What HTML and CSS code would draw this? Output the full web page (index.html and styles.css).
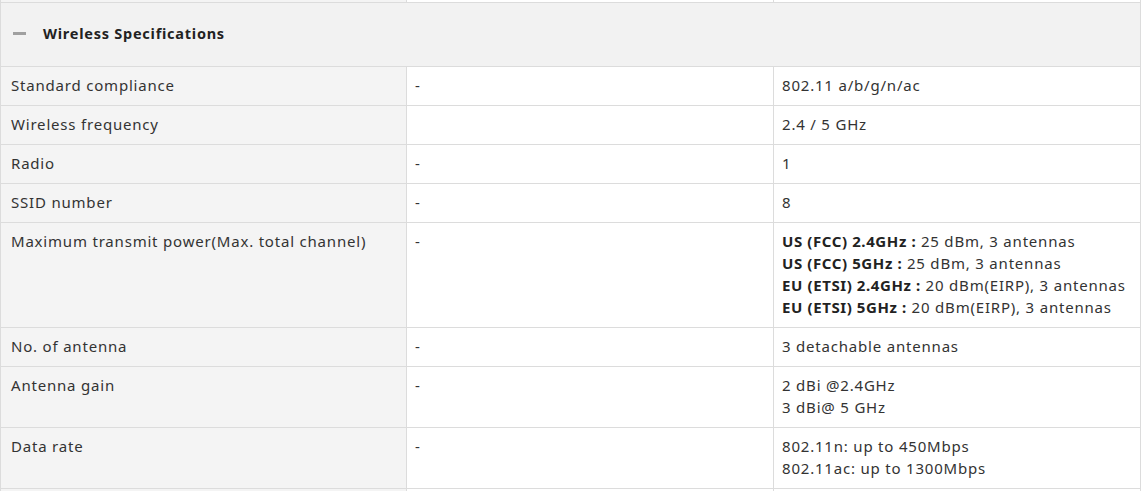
FILE: index.html
```html
<!DOCTYPE html>
<html>
<head>
<meta charset="utf-8">
<link rel="stylesheet" href="styles.css">
</head>
<body>
<div class="spec">
  <div class="row stub"><div class="cell c1"></div><div class="cell c2"></div><div class="cell c3"></div></div>
  <div class="section-head">
    <span class="minus"></span>
    <span class="title">Wireless Specifications</span>
  </div>
  <div class="row"><div class="cell c1">Standard compliance</div><div class="cell c2">-</div><div class="cell c3">802.11 a/b/g/n/ac</div></div>
  <div class="row"><div class="cell c1">Wireless frequency</div><div class="cell c2"></div><div class="cell c3">2.4 / 5 GHz</div></div>
  <div class="row"><div class="cell c1">Radio</div><div class="cell c2">-</div><div class="cell c3">1</div></div>
  <div class="row"><div class="cell c1">SSID number</div><div class="cell c2">-</div><div class="cell c3">8</div></div>
  <div class="row"><div class="cell c1">Maximum transmit power(Max. total channel)</div><div class="cell c2">-</div><div class="cell c3"><b>US (FCC) 2.4GHz :</b> 25 dBm, 3 antennas<br><b>US (FCC) 5GHz :</b> 25 dBm, 3 antennas<br><b>EU (ETSI) 2.4GHz :</b> 20 dBm(EIRP), 3 antennas<br><b>EU (ETSI) 5GHz :</b> 20 dBm(EIRP), 3 antennas</div></div>
  <div class="row"><div class="cell c1">No. of antenna</div><div class="cell c2">-</div><div class="cell c3">3 detachable antennas</div></div>
  <div class="row"><div class="cell c1">Antenna gain</div><div class="cell c2">-</div><div class="cell c3">2 dBi @2.4GHz<br>3 dBi@ 5 GHz</div></div>
  <div class="row"><div class="cell c1">Data rate</div><div class="cell c2">-</div><div class="cell c3">802.11n: up to 450Mbps<br>802.11ac: up to 1300Mbps</div></div>
  <div class="row"><div class="cell c1">&nbsp;</div><div class="cell c2">&nbsp;</div><div class="cell c3">&nbsp;</div></div>
</div>
</body>
</html>
```
FILE: styles.css
```css
html, body {
  margin: 0;
  padding: 0;
  background: #ffffff;
  overflow: hidden;
}
.spec {
  width: 1139px;
  border-left: 1px solid #dcdcdc;
  border-right: 1px solid #dcdcdc;
  font-family: "Noto Sans", sans-serif;
  font-size: 15px;
  letter-spacing: 0.8px;
  color: #333333;
}
.row {
  display: grid;
  grid-template-columns: 406px 367px 1fr;
  border-bottom: 1px solid #dcdcdc;
}
.cell {
  padding: 7px 8px 9px;
  line-height: 22px;
}
.c1 {
  background: #f4f4f4;
  border-right: 1px solid #dcdcdc;
  padding-left: 10px;
}
.c2 {
  border-right: 1px solid #dcdcdc;
}
.c3 b {
  color: #222222;
  font-weight: 700;
  letter-spacing: 0.6px;
}
.stub .cell {
  padding: 0;
  height: 2px;
  line-height: 0;
}
.section-head {
  height: 63px;
  background: #f2f2f2;
  border-bottom: 1px solid #dcdcdc;
  display: flex;
  align-items: center;
  padding-left: 12px;
  gap: 17px;
}
.minus {
  width: 13px;
  height: 3px;
  margin-top: -2px;
  background: #a0a0a0;
}
.title {
  font-weight: 700;
  font-size: 14.5px;
  letter-spacing: 0.75px;
  color: #222222;
  margin-top: -3px;
}
```
